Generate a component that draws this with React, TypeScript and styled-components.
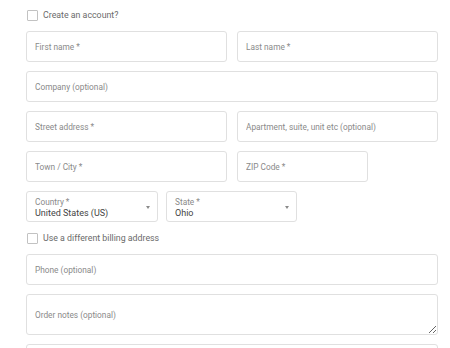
import React from "react";
import styled, { createGlobalStyle } from "styled-components";

const GlobalStyle = createGlobalStyle`
    body {
        margin: 0;
        background: #fff;
        font-family: Roboto, "Liberation Sans", sans-serif;
    }
`;

const Form = styled.form`
    width: 412px;
    padding: 8px 0 0 26px;
    display: flex;
    flex-direction: column;
    gap: 9px;
`;

const CheckRow = styled.label`
    height: 14px;
    display: flex;
    align-items: center;
    gap: 5px;
    font-size: 8.8px;
    color: #6a6a6a;
`;

const Box = styled.input`
    appearance: none;
    width: 11px;
    height: 11px;
    margin: 0 0 0 1px;
    border: 1px solid #c2c2c2;
    border-radius: 1px;
    background: #fff;
`;

const Row = styled.div<{ $cols?: string }>`
    display: grid;
    grid-template-columns: ${p => p.$cols || "1fr 1fr"};
    gap: 10px;
`;

const Field = styled.input`
    box-sizing: border-box;
    width: 100%;
    height: 31px;
    padding: 0 8px;
    border: 1px solid #e0e0e0;
    border-radius: 3px;
    font-family: inherit;
    font-size: 8.3px;
    color: #333;
    outline: none;

    &::placeholder {
        color: #8a8a8a;
    }
`;

const Notes = styled.textarea`
    box-sizing: border-box;
    width: 100%;
    height: 41px;
    padding: 15px 8px 0;
    border: 1px solid #e0e0e0;
    border-radius: 3px;
    font-family: inherit;
    font-size: 8.3px;
    outline: none;
    resize: vertical;

    &::placeholder {
        color: #8a8a8a;
    }
`;

const Selects = styled.div`
    display: flex;
    gap: 8px;
`;

const Select = styled.div<{ $w: number }>`
    box-sizing: border-box;
    width: ${p => p.$w}px;
    height: 31px;
    padding: 2px 8px 0;
    border: 1px solid #e0e0e0;
    border-radius: 3px;
    display: flex;
    align-items: center;
    justify-content: space-between;
`;

const SelectText = styled.div`
    display: flex;
    flex-direction: column;
`;

const SelectLabel = styled.span`
    font-size: 8.3px;
    line-height: 10px;
    color: #8a8a8a;
`;

const SelectValue = styled.span`
    font-size: 9px;
    line-height: 12px;
    color: #444;
`;

const Caret = styled.span`
    width: 0;
    height: 0;
    margin-right: -1px;
    border-left: 2.5px solid transparent;
    border-right: 2.5px solid transparent;
    border-top: 3px solid #8a8a8a;
`;

const App = () => {
    return (
        <>
            <GlobalStyle />
            <Form>
                <CheckRow>
                    <Box type="checkbox" />
                    Create an account?
                </CheckRow>

                <Row>
                    <Field placeholder="First name *" />
                    <Field placeholder="Last name *" />
                </Row>

                <Field placeholder="Company (optional)" />

                <Row>
                    <Field placeholder="Street address *" />
                    <Field placeholder="Apartment, suite, unit etc (optional)" />
                </Row>

                <Row $cols="201px 131px">
                    <Field placeholder="Town / City *" />
                    <Field placeholder="ZIP Code *" />
                </Row>

                <Selects>
                    <Select $w={132}>
                        <SelectText>
                            <SelectLabel>Country *</SelectLabel>
                            <SelectValue>United States (US)</SelectValue>
                        </SelectText>
                        <Caret />
                    </Select>
                    <Select $w={131}>
                        <SelectText>
                            <SelectLabel>State *</SelectLabel>
                            <SelectValue>Ohio</SelectValue>
                        </SelectText>
                        <Caret />
                    </Select>
                </Selects>

                <CheckRow>
                    <Box type="checkbox" />
                    Use a different billing address
                </CheckRow>

                <Field placeholder="Phone (optional)" />
                <Notes placeholder="Order notes (optional)" />
                <Field placeholder="Email address *" />
            </Form>
        </>
    )
}

export default App
